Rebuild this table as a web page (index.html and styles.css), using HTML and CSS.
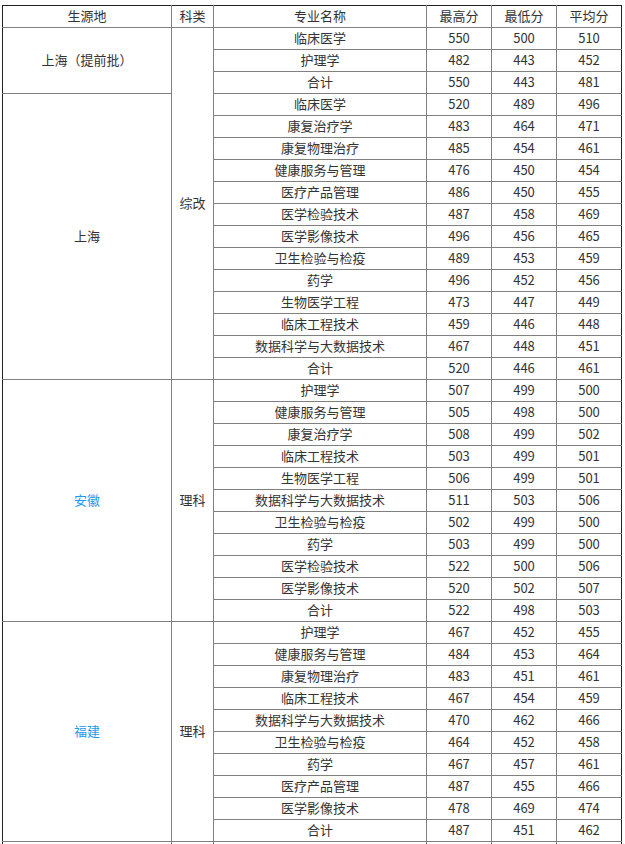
FILE: index.html
```html
<!DOCTYPE html>
<html lang="zh">
<head>
<meta charset="utf-8">
<title>录取分数</title>
<link rel="stylesheet" href="styles.css">
</head>
<body>
<table class="scores">
<colgroup>
<col class="c-prov"><col class="c-type"><col class="c-major"><col class="c-num"><col class="c-num"><col class="c-num">
</colgroup>
<tbody>
<tr><td>生源地</td><td>科类</td><td>专业名称</td><td>最高分</td><td>最低分</td><td>平均分</td></tr>
<tr><td rowspan="3">上海（提前批）</td><td rowspan="16">综改</td><td>临床医学</td><td>550</td><td>500</td><td>510</td></tr>
<tr><td>护理学</td><td>482</td><td>443</td><td>452</td></tr>
<tr><td>合计</td><td>550</td><td>443</td><td>481</td></tr>
<tr><td rowspan="13">上海</td><td>临床医学</td><td>520</td><td>489</td><td>496</td></tr>
<tr><td>康复治疗学</td><td>483</td><td>464</td><td>471</td></tr>
<tr><td>康复物理治疗</td><td>485</td><td>454</td><td>461</td></tr>
<tr><td>健康服务与管理</td><td>476</td><td>450</td><td>454</td></tr>
<tr><td>医疗产品管理</td><td>486</td><td>450</td><td>455</td></tr>
<tr><td>医学检验技术</td><td>487</td><td>458</td><td>469</td></tr>
<tr><td>医学影像技术</td><td>496</td><td>456</td><td>465</td></tr>
<tr><td>卫生检验与检疫</td><td>489</td><td>453</td><td>459</td></tr>
<tr><td>药学</td><td>496</td><td>452</td><td>456</td></tr>
<tr><td>生物医学工程</td><td>473</td><td>447</td><td>449</td></tr>
<tr><td>临床工程技术</td><td>459</td><td>446</td><td>448</td></tr>
<tr><td>数据科学与大数据技术</td><td>467</td><td>448</td><td>451</td></tr>
<tr><td>合计</td><td>520</td><td>446</td><td>461</td></tr>
<tr><td rowspan="11" class="link">安徽</td><td rowspan="11">理科</td><td>护理学</td><td>507</td><td>499</td><td>500</td></tr>
<tr><td>健康服务与管理</td><td>505</td><td>498</td><td>500</td></tr>
<tr><td>康复治疗学</td><td>508</td><td>499</td><td>502</td></tr>
<tr><td>临床工程技术</td><td>503</td><td>499</td><td>501</td></tr>
<tr><td>生物医学工程</td><td>506</td><td>499</td><td>501</td></tr>
<tr><td>数据科学与大数据技术</td><td>511</td><td>503</td><td>506</td></tr>
<tr><td>卫生检验与检疫</td><td>502</td><td>499</td><td>500</td></tr>
<tr><td>药学</td><td>503</td><td>499</td><td>500</td></tr>
<tr><td>医学检验技术</td><td>522</td><td>500</td><td>506</td></tr>
<tr><td>医学影像技术</td><td>520</td><td>502</td><td>507</td></tr>
<tr><td>合计</td><td>522</td><td>498</td><td>503</td></tr>
<tr><td rowspan="10" class="link">福建</td><td rowspan="10">理科</td><td>护理学</td><td>467</td><td>452</td><td>455</td></tr>
<tr><td>健康服务与管理</td><td>484</td><td>453</td><td>464</td></tr>
<tr><td>康复物理治疗</td><td>483</td><td>451</td><td>461</td></tr>
<tr><td>临床工程技术</td><td>467</td><td>454</td><td>459</td></tr>
<tr><td>数据科学与大数据技术</td><td>470</td><td>462</td><td>466</td></tr>
<tr><td>卫生检验与检疫</td><td>464</td><td>452</td><td>458</td></tr>
<tr><td>药学</td><td>467</td><td>457</td><td>461</td></tr>
<tr><td>医疗产品管理</td><td>487</td><td>455</td><td>466</td></tr>
<tr><td>医学影像技术</td><td>478</td><td>469</td><td>474</td></tr>
<tr><td>合计</td><td>487</td><td>451</td><td>462</td></tr>
<tr><td>&nbsp;</td><td>&nbsp;</td><td>&nbsp;</td><td>&nbsp;</td><td>&nbsp;</td><td>&nbsp;</td></tr>
</tbody>
</table>
</body>
</html>
```
FILE: styles.css
```css
html, body {
  margin: 0;
  padding: 0;
  background: #ffffff;
}

body {
  padding: 5px 0 0 2px;
  font-family: "Noto Sans CJK SC", "Noto Sans", sans-serif;
  font-size: 13px;
  color: #333333;
}

.scores {
  border-collapse: collapse;
  table-layout: fixed;
  width: 620px;
  border: 1px solid #222222;
}

.c-prov { width: 169px; }
.c-type { width: 42px; }
.c-major { width: 213px; }
.c-num { width: 65px; }

.scores td {
  border: 1px solid #808080;
  height: 20px;
  padding: 0 0 1px;
  text-align: center;
  vertical-align: middle;
  line-height: 18px;
  white-space: nowrap;
}

.scores tr td:first-child[rowspan],
.scores tr:first-child td:first-child,
.scores tr:last-child td:first-child {
  border-left: 1px solid #222222;
}

.scores tr:first-child td {
  border-top: 1px solid #222222;
}

.scores td:last-child {
  border-right: 1px solid #222222;
}

.scores .link {
  color: #1a9bf0;
}
```
